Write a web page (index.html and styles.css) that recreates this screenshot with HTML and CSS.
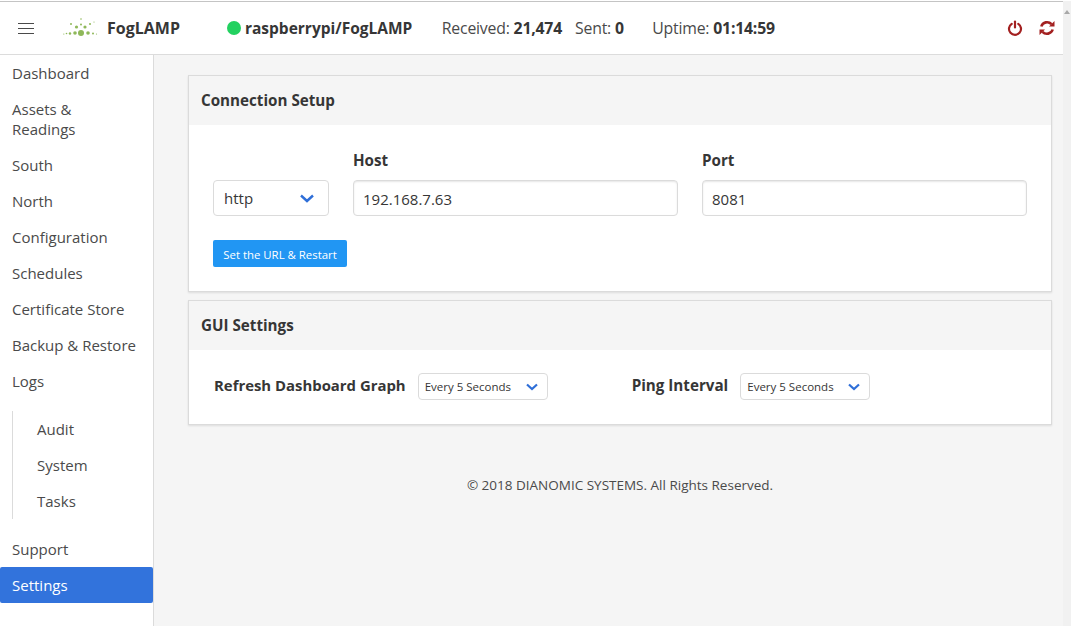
FILE: index.html
```html
<!doctype html>
<html>
<head>
<meta charset="utf-8">
<title>FogLAMP</title>
<link rel="stylesheet" href="styles.css">
</head>

<body>
<div class="page">
	<div class="main">
		<div class="navbar">
			<div class="burger"><span></span><span></span><span></span></div>
			<svg class="logo" width="36" height="22" viewBox="0 0 36 22">
				<g fill="#8fb85a">
					<circle cx="18" cy="16" r="3"/>
					<circle cx="12" cy="16" r="1.8"/>
					<circle cx="25" cy="16" r="1.8"/>
					<circle cx="7" cy="16.500" r="1.2"/>
					<circle cx="3.500" cy="16.500" r="0.800"/>
					<circle cx="0.800" cy="17" r="0.600"/>
					<circle cx="30" cy="16.500" r="1"/>
					<circle cx="33.500" cy="17" r="0.600"/>
					<circle cx="13.500" cy="10" r="1.600"/>
					<circle cx="22" cy="10" r="1.600"/>
					<circle cx="8" cy="7" r="1"/>
					<circle cx="27" cy="7" r="1"/>
					<circle cx="18" cy="7.500" r="1"/>
					<circle cx="18" cy="2" r="0.800"/>
					<circle cx="31" cy="5" r="0.600"/>
				</g>
			</svg>
			<span class="brand">FogLAMP</span>
			<span class="status-dot"></span>
			<span class="host-name">raspberrypi/FogLAMP</span>
			<span class="stat stat-received">Received: <b>21,474</b></span>
			<span class="stat stat-sent">Sent: <b>0</b></span>
			<span class="stat stat-uptime">Uptime: <b>01:14:59</b></span>
			<div class="nav-icons">
				<svg width="16" height="16" viewBox="0 0 16 16" fill="none" stroke="#a32020" stroke-width="2.200" stroke-linecap="round">
					<path d="M4.700 3.800a6 6 0 1 0 6.600 0"/>
					<path d="M8 1.500v6"/>
				</svg>
				<svg width="16" height="16" viewBox="0 0 16 16" fill="none" stroke="#a32020" stroke-width="2.600">
					<path d="M2.300 6.500a6 6 0 0 1 10.200-2.300"/>
					<path d="M13.700 9.500a6 6 0 0 1-10.200 2.300"/>
					<path d="M15.500 1v5.500h-5.500z" fill="#a32020" stroke="none"/>
					<path d="M0.500 15v-5.500h5.500z" fill="#a32020" stroke="none"/>
				</svg>
			</div>
		</div>

		<div class="wrap">
			<div class="sidebar">
				<ul class="menu">
					<li>Dashboard</li>
					<li>Assets &amp;<br>Readings</li>
					<li>South</li>
					<li>North</li>
					<li>Configuration</li>
					<li>Schedules</li>
					<li>Certificate Store</li>
					<li>Backup &amp; Restore</li>
					<li>Logs</li>
				</ul>
				<ul class="submenu">
					<li>Audit</li>
					<li>System</li>
					<li>Tasks</li>
				</ul>
				<ul class="menu">
					<li>Support</li>
					<li class="active">Settings</li>
				</ul>
			</div>

			<div class="content">
				<div class="card">
					<div class="card-head">Connection Setup</div>
					<div class="card-body setup-body">
						<div class="setup-row">
							<div class="select select-proto">http<svg class="chev" width="14" height="9" viewBox="0 0 14 9"><path d="M1 1.500l6 5.500 6-5.500" fill="none" stroke="#2f6fd8" stroke-width="2.400"/></svg></div>
							<div class="field field-host">
								<label>Host</label>
								<div class="input">192.168.7.63</div>
							</div>
							<div class="field field-port">
								<label>Port</label>
								<div class="input">8081</div>
							</div>
						</div>
						<a class="btn">Set the URL &amp; Restart</a>
					</div>
				</div>

				<div class="card">
					<div class="card-head">GUI Settings</div>
					<div class="card-body gui-body">
						<label class="gui-label">Refresh Dashboard Graph</label>
						<div class="select select-small">Every 5 Seconds<svg class="chev" width="12" height="8" viewBox="0 0 12 8"><path d="M1 1.500l5 4.500 5-4.500" fill="none" stroke="#2f6fd8" stroke-width="2.200"/></svg></div>
						<label class="gui-label gui-ping">Ping Interval</label>
						<div class="select select-small">Every 5 Seconds<svg class="chev" width="12" height="8" viewBox="0 0 12 8"><path d="M1 1.500l5 4.500 5-4.500" fill="none" stroke="#2f6fd8" stroke-width="2.200"/></svg></div>
					</div>
				</div>

				<div class="footer">© 2018 DIANOMIC SYSTEMS. All Rights Reserved.</div>
			</div>
		</div>
	</div>
	<div class="scrollbar"><span class="scroll-up"></span></div>
</div>
</body>
</html>
```

FILE: styles.css
```css
*{margin:0; padding:0; box-sizing:border-box; list-style:none;}
html,body{height:100%; overflow:hidden;}
body{font-family:"Open Sans","Noto Sans",sans-serif; color:#4a4a4a; font-size:15px; background:#fff;}
.page{height:626px; display:flex; padding-top:1px;}
.main{flex:1; min-width:0; display:flex; flex-direction:column; border-top:1px solid #c4c4c4;}

.navbar{height:53px; flex:none; display:flex; align-items:center; border-bottom:1px solid #dcdcdc; background:#fff; padding-left:18px; padding-right:8px;}
.burger{width:16px; display:flex; flex-direction:column; gap:4px;}
.burger span{display:block; height:1px; background:#4a4a4a;}
.logo{margin-left:29px;}
.brand{margin-left:8px; font-weight:700; font-size:16px; color:#363636;}
.status-dot{width:14px; height:14px; border-radius:50%; background:#23d160; margin-left:47px;}
.host-name{margin-left:4px; font-weight:700; font-size:15.500px; color:#363636;}
.stat{font-size:15.800px; color:#4a4a4a; letter-spacing:-0.200px;}
.stat b{color:#363636;}
.stat-received{margin-left:29.500px;}
.stat-sent{margin-left:13px;}
.stat-uptime{margin-left:28.500px;}
.nav-icons{margin-left:auto; display:flex; gap:16px;}

.wrap{flex:1; display:flex; min-height:0;}
.sidebar{width:154px; flex:none; background:#fff; border-right:1px solid #dbdbdb;}
.menu li{padding:8px 12px; line-height:20px; font-size:15px; color:#4a4a4a;}
.menu li.active{background:#3273dc; color:#fff; border-radius:2px;}
.submenu{margin:12px 0 12px 12px; border-left:1px solid #dbdbdb;}
.submenu li{padding:8px 0 8px 24px; line-height:20px; font-size:15px; color:#4a4a4a;}

.content{flex:1; background:#f5f5f5; padding:20px 12px 0 34px;}
.card{background:#fff; border:1px solid #dbdbdb; box-shadow:0 1px 2px rgba(10,10,10,.1); margin-bottom:8px;}
.card-head{height:49px; background:#f5f5f5; font-weight:700; font-size:15.200px; color:#363636; padding-left:12px; line-height:49px;}
.setup-body{height:166px; padding:24px 24px 0;}
.setup-row{display:flex; align-items:flex-end; gap:24px;}
.select{height:36px; border:1px solid #dbdbdb; border-radius:4px; background:#fff; display:flex; align-items:center; justify-content:space-between; color:#363636;}
.select-proto{width:116px; padding:0 14px 0 10px; font-size:15px;}
.field label{display:block; font-weight:700; font-size:15.200px; color:#363636; margin-bottom:9px; line-height:22px;}
.input{height:36px; border:1px solid #dbdbdb; border-radius:4px; box-shadow:inset 0 1px 2px rgba(10,10,10,.1); padding:0 9px; line-height:36px; font-size:15px; color:#363636;}
.field-host{width:325px;}
.field-port{width:325px;}
.btn{display:inline-block; margin-top:24px; width:134px; height:27px; line-height:29px; text-align:center; background:#2196f3; color:#fff; font-size:11.400px; border-radius:2px;}

.gui-body{height:74px; display:flex; align-items:center; padding:0 0 1px 25px;}
.gui-label{font-weight:700; font-size:14.900px; color:#363636; padding-bottom:3px;}
.gui-ping{margin-left:84px; font-size:15.200px;}
.select-small{width:130px; height:27px; margin-left:12px; padding:0 9px 0 6px; font-size:11.500px;}

.footer{text-align:center; margin-top:51px; font-size:13.500px; color:#4a4a4a;}
.scrollbar{width:8px; flex:none; background:#f1f1f1; display:flex; justify-content:center; padding-top:9px;}
.scroll-up{width:0; height:0; border-left:3px solid transparent; border-right:3px solid transparent; border-bottom:4px solid #a8a8a8;}
```
